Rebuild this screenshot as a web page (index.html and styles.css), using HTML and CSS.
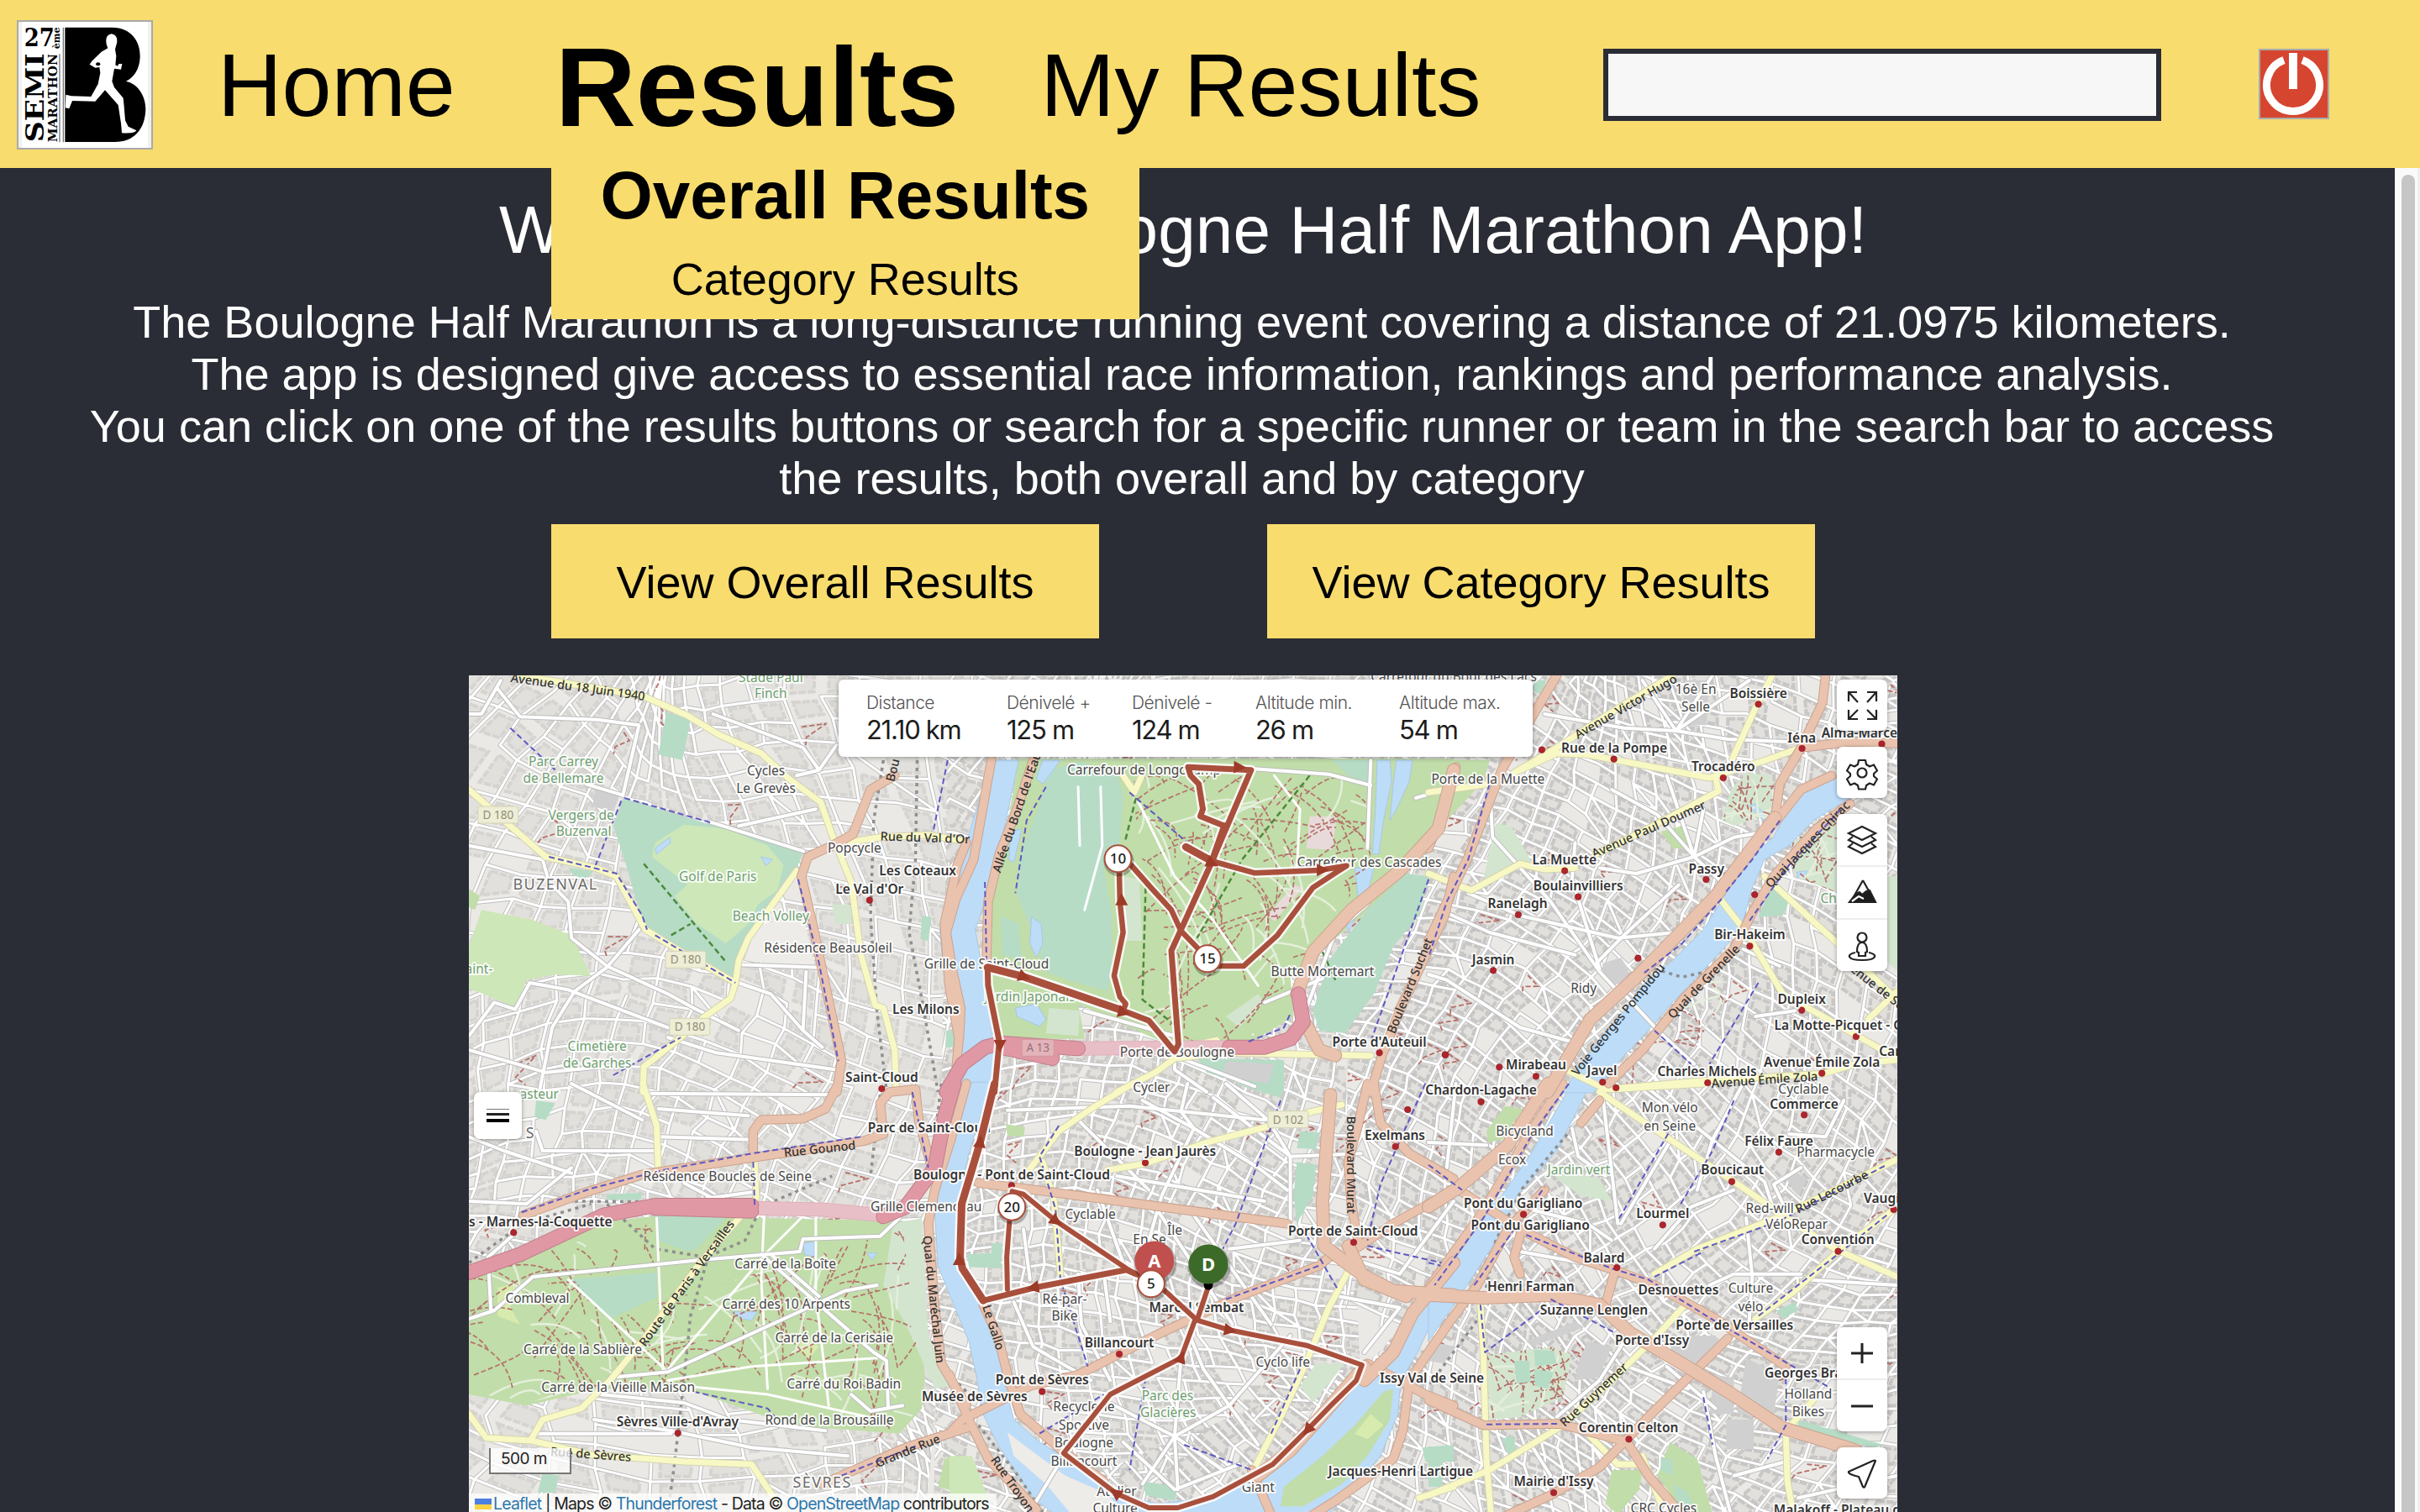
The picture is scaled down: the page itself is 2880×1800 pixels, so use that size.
FILE: index.html
```html
<!DOCTYPE html>
<html lang="en">
<head>
<meta charset="utf-8">
<title>Boulogne Half Marathon</title>
<link rel="stylesheet" href="styles.css">
</head>
<body>
<header class="header">
  <svg class="logo" viewBox="66 78 474 450" preserveAspectRatio="none">
    <rect x="66" y="78" width="474" height="450" fill="#fff"/>
    <path fill="#f0f0f0" d="M66 78h12v450h-12zM528 78h12v450h-12z"/>
    <path d="M232 98H400C470 98 502 150 500 205C498 250 475 280 450 290C490 298 520 340 520 390C518 460 480 507 410 507H232Z"/>
    <path fill="#fff" d="M385 172L380 158Q374 124 398 121Q420 124 418 150L411 176L415 200L412 232L420 236L424 228L436 228L432 248L408 245L400 290L408 312L440 350L443 380L447 430L458 452L487 466Q480 478 435 475L432 440L422 375L375 322L340 362L258 360L247 388L233 385L235 338L255 343L325 345L350 300L358 260L355 240L340 242L320 230L328 218L362 185Z"/>
    <ellipse cx="350" cy="229" rx="8" ry="6"/>
    <path fill="none" stroke="#777" stroke-width="4" d="M213 193V508M226 98V508"/>
    <g class="logo-text">
      <text x="86" y="165" font-size="92" textLength="108" lengthAdjust="spacingAndGlyphs">27</text>
      <text transform="translate(213 175) rotate(-90)" font-size="32" textLength="78" lengthAdjust="spacingAndGlyphs">ème</text>
      <text transform="translate(156 508) rotate(-90)" font-size="90" textLength="318" lengthAdjust="spacingAndGlyphs">SEMI</text>
      <text transform="translate(204 508) rotate(-90)" font-size="46" textLength="316" lengthAdjust="spacingAndGlyphs">MARATHON</text>
    </g>
  </svg>
  <nav class="nav">
    <a class="nav-link">Home</a>
    <div class="nav-group">
      <a class="nav-link nav-link-active">Results</a>
      <div class="dropdown">
        <a class="dropdown-link dropdown-link-active">Overall Results</a>
        <a class="dropdown-link">Category Results</a>
      </div>
    </div>
    <a class="nav-link">My Results</a>
  </nav>
  <input class="search" type="text">
  <svg class="power" viewBox="0 0 80 80">
    <rect width="80" height="80" fill="#d64530"/>
    <path fill="none" stroke="#fff" stroke-width="9" d="M28 11.5A31.5 31.5 0 1 0 50 11.5"/>
    <rect x="34" y="3" width="10" height="43" fill="#fff"/>
  </svg>
</header>
<div class="viewport">
  <main class="content">
    <h1 class="title">Welcome to the Boulogne Half Marathon App!</h1>
    <p class="intro">The Boulogne Half Marathon is a long-distance running event covering a distance of 21.0975 kilometers.<br>The app is designed give access to essential race information, rankings and performance analysis.<br>You can click on one of the results buttons or search for a specific runner or team in the search bar to access<br>the results, both overall and by category</p>
    <div class="actions">
      <a class="button">View Overall Results</a>
      <a class="button">View Category Results</a>
    </div>
    <section class="map">
      <svg class="map-canvas" id="map" viewBox="558 804 1700 996" width="1700" height="996"></svg>
      <dl class="stats">
        <div class="stat"><dt>Distance</dt><dd>21.10 km</dd></div>
        <div class="stat"><dt>Dénivelé +</dt><dd>125 m</dd></div>
        <div class="stat"><dt>Dénivelé -</dt><dd>124 m</dd></div>
        <div class="stat"><dt>Altitude min.</dt><dd>26 m</dd></div>
        <div class="stat"><dt>Altitude max.</dt><dd>54 m</dd></div>
      </dl>
      <div class="tools tools-top">
        <div class="tool-box"><svg class="tool" viewBox="0 0 60 61"><path d="M14 26V15H24M14 15L25 27M36 15H47V26M47 15L36 27M14 36V47H25M14 47L25 36M36 47H47V36M47 47L36 36"/></svg></div>
        <div class="tool-box"><svg class="tool" viewBox="0 0 60 61"><circle cx="30" cy="31" r="5.5"/><path stroke-linejoin="round" d="M26 16h8l1 5 4 2.500 5-2 4 7-4 3.500v3l4 3.500-4 7-5-2-4 2.500-1 4.500h-8l-1-4.500-4-2.500-5 2-4-7 4-3.500v-3l-4-3.500 4-7 5 2 4-2.500z"/></svg></div>
        <div class="tool-box">
          <svg class="tool" viewBox="0 0 60 61"><path d="M30 15L46 23L30 31L14 23ZM19 27L14 31L30 39L46 31L41 27M19 35L14 39L30 47L46 39L41 35"/></svg>
          <svg class="tool" viewBox="0 0 60 61"><path d="M31 16L17 41M31 16L45 41"/><path fill="#1b1b1b" d="M23 32l4-2 3 3 5-4 4-1 7 14H15z"/><path stroke="#fff" d="M18 41l8-6 6 3"/></svg>
          <svg class="tool" viewBox="0 0 60 61"><circle cx="30" cy="21" r="5.500"/><path d="M24 38c0-8 2-11 6-11s6 3 6 11l-2 1v4h-8v-4zM22 39c-11 2-10 9 8 9s19-7 8-9"/></svg>
        </div>
      </div>
      <div class="tools tools-bottom">
        <div class="tool-box"><svg class="tool tool-bold" viewBox="0 0 60 61"><path d="M17 31H43M30 19V43"/></svg><svg class="tool tool-bold" viewBox="0 0 60 61"><path d="M17 31H43"/></svg></div>
        <div class="tool-box"><svg class="tool" viewBox="0 0 60 61"><path stroke-linejoin="round" d="M46 16Q45 15 43 16L14 29Q13 32 26 35L31 47Q33 49 34 45Z"/></svg></div>
      </div>
      <div class="menu-toggle"><i></i><i></i><i></i></div>
      <div class="scale">500 m</div>
      <div class="attribution"><svg class="flag" viewBox="0 0 20 13"><path fill="#4d7fe0" d="M0 0h20v7H0z"/><path fill="#f6d443" d="M0 7h20v6H0z"/></svg><a>Leaflet</a> | Maps © <a>Thunderforest</a> - Data © <a>OpenStreetMap</a> contributors</div>
    </section>
  </main>
  <div class="scrollbar"><div class="thumb"></div></div>
</div>
<script src="map.js"></script>
</body>
</html>
```
FILE: styles.css
```css
* { box-sizing: border-box; }
body {
  margin: 0;
  width: 2880px;
  height: 1800px;
  overflow: hidden;
  display: flex;
  flex-direction: column;
  background: #2a2d35;
  font-family: "Liberation Sans", Arial, sans-serif;
  color: #000;
}
.header {
  flex: none;
  height: 200px;
  padding: 2px 0 0 20px;
  display: flex;
  align-items: center;
  background: #f8dc6e;
  position: relative;
  z-index: 2;
}
.logo { width: 162px; height: 154px; border: 2px solid #aaa; }
.logo-text { font-family: "DejaVu Serif", serif; font-weight: bold; }
.nav { display: flex; align-items: center; margin-left: 77px; width: 1649px; height: 198px; white-space: nowrap; }
.nav-link { font-size: 106px; line-height: 122px; }
.nav-group { position: relative; margin: 0 97px 0 119px; padding-top: 5px; }
.nav-link-active { font-size: 133px; line-height: 152px; font-weight: bold; }
.dropdown {
  position: absolute;
  left: -5px;
  top: 176px;
  width: 700px;
  height: 181px;
  display: flex;
  flex-direction: column;
  align-items: center;
  background: #f8dc6e;
}
.dropdown-link { font-size: 54px; line-height: 62px; margin-top: 22px; }
.dropdown-link-active { font-size: 80px; line-height: 92px; margin-top: -12px; font-weight: bold; }
.search { width: 664px; height: 86px; border: 6px solid #2a2d35; background: #f7f7f7; padding: 0; }
.power { width: 84px; height: 84px; margin: -2px 0 0 116px; border: 2px solid #aaa; }
.viewport { flex: 1; min-height: 0; display: flex; }
.content {
  flex: 1;
  padding: 28px 34px 0 0;
  display: flex;
  flex-direction: column;
  align-items: center;
  color: #fff;
  overflow: hidden;
}
.title { margin: 0; font-size: 80px; line-height: 92px; font-weight: normal; letter-spacing: .15px; white-space: nowrap; }
.intro { margin: 32px 0 24px -3px; font-size: 54px; line-height: 62px; letter-spacing: .02px; text-align: center; white-space: nowrap; }
.actions { display: flex; gap: 200px; margin-bottom: 44px; }
.button { width: 652px; height: 136px; line-height: 138px; text-align: center; font-size: 54px; background: #f8dc6e; color: #000; }
.scrollbar { width: 30px; height: 1600px; padding: 8px 3px 0 8px; background: #fafafa; border-right: 3px solid #efefef; }
.thumb { width: 16px; height: 100%; border-radius: 8px 8px 0 0; background: #c6c6c6; }

.map { position: relative; flex: none; width: 1700px; height: 996px; overflow: hidden; font-family: Inter, "Noto Sans", sans-serif; color: #222; }
.map-canvas { display: block; background: #ebe9e5; }
.stats {
  position: absolute;
  left: 440px;
  top: 5px;
  width: 826px;
  height: 92px;
  margin: 0;
  padding: 15px 0 0 33px;
  display: grid;
  grid-template-columns: 167px 149px 147px 171px 1fr;
  background: #fff;
  border-radius: 6px;
  box-shadow: 0 1px 6px rgba(0, 0, 0, .35);
  white-space: nowrap;
}
.stat dt { font-size: 21px; line-height: 26px; letter-spacing: -.5px; font-weight: 300; color: #555; }
.stat dd { margin: 0; font-size: 31px; line-height: 38px; letter-spacing: -1.3px; color: #1c1c1c; }
.tools { position: absolute; right: 12px; width: 60px; display: flex; flex-direction: column; gap: 19px; }
.tools-top { top: 5px; }
.tools-bottom { top: 776px; }
.tool-box { background: #fff; border-radius: 7px; box-shadow: 0 1px 5px rgba(0, 0, 0, .35); }
.tool { display: block; width: 60px; height: 61px; fill: none; stroke: #222; stroke-width: 2.2; }
.tool + .tool { border-top: 2px solid #eee; height: 63px; }
.tool-bold { stroke-width: 3; }
.menu-toggle { position: absolute; left: 6px; top: 496px; width: 57px; height: 56px; padding: 20px 15px; background: #fff; border-radius: 7px; box-shadow: 0 1px 5px rgba(0, 0, 0, .35); display: flex; flex-direction: column; gap: 4px; }
.menu-toggle i { height: 4px; background: #222; }
.menu-toggle i:first-child { background: #777; height: 2px; }
.menu-toggle i:last-child { height: 5px; background: #000; }
.scale { position: absolute; left: 24px; top: 920px; width: 98px; height: 31px; padding-left: 12px; border: 2px solid #777; border-top: 0; background: rgba(255, 255, 255, .75); font: 19px/26px Inter, sans-serif; letter-spacing: -.5px; }
.attribution { position: absolute; left: 0; bottom: 0; height: 22px; padding: 0 9px 0 7px; background: rgba(255, 255, 255, .75); font-size: 19.500px; line-height: 24px; letter-spacing: -.85px; white-space: nowrap; }
.attribution a { color: #2b77ad; }
.flag { width: 20px; height: 13px; margin-right: 2px; }

.road-line { fill: none; stroke-linejoin: round; stroke-linecap: round; }
.label { font-family: "Noto Sans", sans-serif; font-size: 15.500px; fill: #484848; text-anchor: middle; paint-order: stroke; stroke: rgba(255, 255, 255, .85); stroke-width: 4px; stroke-linejoin: round; }
.label-station { font-weight: 600; fill: #333; }
.label-park { fill: #6f9f70; }
.label-district { font-size: 18px; letter-spacing: 1.4px; fill: #6c6c6c; }
.label-road { font-size: 14.500px; font-weight: 500; fill: #333; stroke: none; }
.label-start { text-anchor: start; }
.shield { font-family: "Noto Sans", sans-serif; font-size: 13.500px; fill: #8f8f78; text-anchor: middle; }
.marker { font-family: "Noto Sans", sans-serif; font-size: 17px; font-weight: 500; fill: #222; text-anchor: middle; }
.marker-end { font-size: 22px; font-weight: bold; fill: #fff; }
```
FILE: map.js
```js
const svg = document.getElementById('map');

// Survey sheets: origin and units-per-pixel for each of the six map sections.
const sheets = {
  a: [550, 790, 600 / 1568], b: [1130, 790, 600 / 1568], c: [1700, 790, 570 / 1568],
  d: [550, 1290, 600 / 1568], e: [1130, 1290, 600 / 1568], f: [1700, 1290, 570 / 1568]
};
const at = (s, x, y) => [sheets[s][0] + x * sheets[s][2], sheets[s][1] + y / 3];
const path = (s, str) => 'M' + str.trim().split(/\s+/).map(p => {
  const [x, y] = p.split(',').map(Number);
  return at(s, x, y).map(v => v.toFixed(1)).join(' ');
}).join('L');
const el = (name, attrs, parent = svg, text) => {
  const n = document.createElementNS('http://www.w3.org/2000/svg', name);
  for (const k in attrs) n.setAttribute(k, attrs[k]);
  if (text) n.textContent = text;
  parent.appendChild(n);
  return n;
};
let seed = 7;
const rnd = () => (seed = (seed * 16807) % 2147483647) / 2147483647;

// Street mesh of the built-up districts.
const defs = el('defs', {});
const O = 1.8367;
const poly = s => s.split(' ').map(p => p.split(',').map(v => v * O).join(',')).join(' ');
function mesh(id, outline, angle, stepX, stepY, block) {
  el('polygon', { points: poly(outline) }, el('clipPath', { id }, defs));
  const g = el('g', { 'clip-path': `url(#${id})` });
  const pts = outline.split(' ').map(p => p.split(',').map(v => v * O));
  const cx = pts.reduce((t, p) => t + p[0], 0) / pts.length, cy = pts.reduce((t, p) => t + p[1], 0) / pts.length;
  const R = Math.max(...pts.map(p => Math.hypot(p[0] - cx, p[1] - cy)));
  const n = Math.ceil(R / stepX), m = Math.ceil(R / stepY);
  const a = angle * Math.PI / 180, grid = [];
  for (let i = -n; i <= n; i++) {
    grid[i + n] = [];
    for (let j = -m; j <= m; j++) {
      const u = i * stepX + (rnd() - .5) * stepX * .32, v = j * stepY + (rnd() - .5) * stepY * .32;
      const b = a + .35 * Math.sin(u / 170 + 1) * Math.cos(v / 150);
      grid[i + n][j + m] = [cx + u * Math.cos(b) - v * Math.sin(b), cy + u * Math.sin(b) + v * Math.cos(b)];
    }
  }
  let streets = '', blocks = '', paths = '';
  const f = p => p[0].toFixed(1) + ' ' + p[1].toFixed(1);
  for (let i = 0; i < 2 * n; i++) for (let j = 0; j < 2 * m; j++) {
    const p = grid[i][j], q = grid[i + 1][j], r = grid[i + 1][j + 1], s = grid[i][j + 1];
    if (rnd() < .86) streets += 'M' + f(p) + 'L' + f(q);
    if (rnd() < .86) streets += 'M' + f(p) + 'L' + f(s);
    if (rnd() < .06) streets += 'M' + f(p) + 'L' + f(r);
    const c = [(p[0] + r[0]) / 2, (p[1] + r[1]) / 2];
    const k = t => [c[0] + (t[0] - c[0]) * .62, c[1] + (t[1] - c[1]) * .62];
    if (rnd() < .82) blocks += 'M' + [p, q, r, s].map(k).map(f).join('L') + 'Z';
    if (rnd() < .05) paths += 'M' + f(k(p)) + 'L' + f(k(q)) + 'L' + f(k(s)) + 'l' + ((rnd() - .5) * 24).toFixed(1) + ' 9';
  }
  el('path', { d: blocks, fill: '#e2e0dc', stroke: block, 'stroke-width': 4, 'stroke-dasharray': '9 2' }, g);
  el('path', { d: streets, stroke: '#bfbfbf', 'stroke-width': 5, 'stroke-linecap': 'round' }, g);
  el('path', { d: streets, stroke: '#fff', 'stroke-width': 3, 'stroke-linecap': 'round' }, g);
  el('path', { d: paths, fill: 'none', stroke: '#b76e68', 'stroke-width': 1.8, 'stroke-dasharray': '6 3' }, g);
}
mesh('west', '304,438 650,438 600,980 304,980', 12, 35, 27, '#d6d4d0');
mesh('boulogne', '615,438 890,438 872,700 882,900 700,980 605,980', 9, 25, 22, '#cdcbc8');
mesh('paris16', '875,438 1229,438 1190,520 980,780 930,860 872,860', 28, 28, 21, '#c8c7c5');
mesh('paris15', '1229,438 1229,980 650,980 890,880 980,780 1170,520', 38, 29, 21, '#c8c7c5');

const fills = { wood: '#c1dda9', pitch: '#b6dcc6', grass: '#cde7b8', pale: '#d4e5cf', grey: '#d0d0d0', water: '#bddcf8', land: '#eeece8', lawn: '#d8ebae', hosp: '#e8dada' };
const areas = [
  // golf course and western greens
  ['a', 'pitch', '500,480 1062,675 1040,730 880,985 848,1140 760,1090 650,1000 575,950 540,840 505,700 470,580'],
  ['a', 'grass', '600,640 590,690 700,790 660,830 730,930 820,1000 890,930 920,860 980,810 1000,720 950,650 820,590 690,575'],
  ['a', 'water', '600,660 645,620 648,640 605,680'], ['a', 'water', '930,690 965,700 945,722'],
  ['a', 'pitch', '635,175 712,195 685,345 610,325'], ['a', 'grey', '415,445 490,470 470,530 405,510'],
  ['a', 'grass', '60,880 220,915 340,970 400,1115 290,1110 200,1130 170,1230 90,1190 21,1160 21,1010'],
  ['a', 'land', '930,930 1060,900 1100,1090 880,1060 900,980'], ['a', 'wood', '21,805 55,830 40,880 21,870'],
  ['a', 'pitch', '1430,900 1460,905 1450,990 1425,985'], ['a', 'pitch', '1505,1310 1530,1310 1530,1370 1503,1370'],
  ['a', 'pitch', '330,730 410,740 380,770 345,755'], ['a', 'pale', '1150,860 1210,860 1210,930 1160,930'],
  // Bois de Boulogne
  ['b', 'wood', '215,340 1568,340 1540,460 1500,620 1440,720 1340,850 1200,980 1060,1120 1070,1260 940,1350 730,1385 540,1290 400,1215 420,1340 160,1340 120,1090 115,900 160,720'],
  ['b', 'pitch', '310,380 400,350 520,385 540,470 530,640 480,740 505,900 505,1100 490,1170 370,1130 300,1100 270,990 210,830 215,700 280,500'],
  ['b', 'pale', '545,760 590,770 600,990 540,990'], ['b', 'pitch', '160,900 215,930 225,1060 165,1040'],
  ['b', 'hosp', '1120,545 1205,545 1190,665 1110,660'], ['b', 'hosp', '1070,790 1100,800 1010,920 990,900'],
  ['b', 'pitch', '1420,750 1490,760 1460,900 1380,1010 1320,1180 1230,1320 1150,1310 1130,1240 1180,1060 1300,880'],
  ['b', 'pitch', '1190,345 1310,345 1310,430 1240,400'], ['b', 'pale', '860,1260 960,1180 980,1210 900,1300'],
  ['b', 'pitch', '770,1410 1040,1415 1040,1530 940,1510 800,1460'], ['b', 'grey', '860,1420 1010,1430 990,1500 850,1470'],
  ['b', 'pale', '310,1230 405,1240 400,1330 300,1320'],
  ['b', 'water', '1330,345 1370,345 1375,420 1350,560 1335,680 1315,680 1325,520'], ['b', 'water', '1390,345 1440,345 1430,420 1390,520 1370,560 1380,430'],
  ['b', 'water', '255,905 285,930 290,1000 270,1050 250,1000'], ['b', 'water', '205,1230 270,1215 300,1270 280,1295 210,1260'],
  ['b', 'water', '1260,730 1320,730 1300,820 1240,960 1235,930 1270,830'], ['b', 'water', '190,600 225,590 200,710 185,700'],
  ['b', 'water', '290,345 345,345 290,430 270,410'],
  // right bank and Champ-de-Mars
  ['c', 'wood', '0,345 200,345 180,420 60,560 0,560'], ['c', 'pitch', '345,60 385,60 375,110 345,100'],
  ['c', 'pale', '220,570 270,580 340,710 180,770'], ['c', 'wood', '760,600 830,580 860,660 800,660'],
  ['c', 'grey', '570,1070 630,1050 655,1090 640,1140 600,1150 570,1120'],
  ['c', 'pale', '1040,390 1120,400 1130,530 1000,580 960,560 990,450'], ['c', 'water', '1050,510 1070,500 1110,550 1095,560'],
  ['c', 'pale', '1190,640 1340,520 1340,820 1200,760'], ['c', 'pitch', '1120,795 1180,850 1160,900 1080,905'],
  ['c', 'pale', '1500,760 1535,760 1535,1100 1500,1060'], ['c', 'grey', '840,60 920,60 910,220 830,220'],
  ['c', 'water', '1205,745 1240,740 1230,765 1210,765'],
  // Parc de Saint-Cloud
  ['d', 'wood', '21,700 200,600 400,500 620,470 900,480 1370,490 1410,780 1440,1050 1430,1160 1360,1250 1020,1220 700,1090 430,1090 200,1150 21,1110'],
  ['d', 'pitch', '330,700 605,675 605,765 460,840'], ['d', 'pitch', '600,465 820,480 730,590 700,600 610,560'],
  ['d', 'pale', '1340,500 1430,480 1450,900 1520,1080 1470,1090 1380,860 1310,720'], ['d', 'pitch', '230,60 290,70 260,130 225,120'],
  ['d', 'lawn', '110,730 170,710 150,800 180,860 110,830'], ['d', 'lawn', '1070,900 1110,940 1080,980 1040,950'],
  ['d', 'water', '838,815 918,815 900,845 870,840'], ['d', 'water', '1060,570 1095,565 1095,620 1065,610'], ['d', 'water', '1260,605 1290,605 1275,630'],
  ['d', 'pitch', '450,395 560,390 555,415 450,415'], ['d', 'wood', '1500,1340 1568,1330 1568,1470 1480,1440'],
  ['d', 'pitch', '250,1390 300,1400 290,1460 235,1460'],
  // Boulogne-Billancourt
  ['e', 'pitch', '130,570 165,570 160,660 60,655 55,610 130,605'], ['e', 'pitch', '890,0 1040,0 1030,50 940,20'],
  ['e', 'pitch', '1090,170 1150,175 1140,235 1080,230'], ['e', 'pitch', '1080,280 1140,290 1130,400 1080,500 1070,400'],
  ['e', 'wood', '175,145 235,155 230,190 180,185'], ['e', 'pale', '1140,1000 1230,1000 1130,1140 1090,1080'],
  ['e', 'pitch', '600,1420 710,1440 700,1490 610,1470'], ['e', 'pitch', '1470,1300 1568,1290 1568,1350 1480,1350'],
  ['e', 'grass', '0,1330 70,1330 120,1480 90,1540 0,1540'],
  // Issy and the exhibition grounds
  ['f', 'pale', '190,970 400,940 470,970 440,1120 300,1190 200,1200'],
  ['f', 'grey', '0,920 90,940 50,1000 0,990'], ['f', 'grey', '520,920 600,940 560,1050 480,1060 490,1000'],
  ['f', 'grey', '820,900 940,900 960,940 890,1020 790,950'], ['f', 'grey', '935,1040 1000,1050 1000,1180 920,1180'],
  ['f', 'grey', '1040,980 1150,1040 1130,1190 1010,1180'], ['f', 'grey', '975,1200 1065,1200 1065,1305 975,1305'],
  ['f', 'pitch', '1210,1200 1490,1290 1460,1300 1210,1240'], ['f', 'pitch', '1140,810 1200,780 1210,810 1160,840'],
  ['f', 'pale', '395,300 560,340 600,420 500,400 430,350'], ['f', 'wood', '190,170 250,80 310,90 240,200 195,210'],
  ['f', 'wood', '790,1280 880,1340 930,1540 840,1540 750,1400'], ['f', 'pitch', '760,1340 800,1340 800,1400 760,1380'], ['f', 'pitch', '800,1430 850,1460 870,1520 820,1510'],
  ['f', 'wood', '600,1380 700,1380 690,1450 620,1540 580,1500'], ['f', 'pitch', '0,1295 50,1300 45,1440 0,1440'], ['f', 'pitch', '240,1270 275,1255 290,1310 260,1325'],
  ['f', 'grey', '1190,310 1240,340 1210,400 1170,340'], ['f', 'grey', '480,850 510,870 340,940 320,920'],
  // the Seine
  ['a', 'water', '1568,790 1530,800 1515,950 1510,1060 1540,1200 1568,1280'],
  ['b', 'water', '130,345 215,345 190,480 150,700 110,850 80,950 100,1080 125,1250 140,1400 130,1530 30,1530 40,1350 20,1200 -20,1080 -30,950 10,800 60,610'],
  ['e', 'water', '30,-5 132,-5 100,100 60,250 30,400 20,600 40,700 100,780 130,880 160,1000 175,1090 200,1200 280,1280 350,1330 450,1420 560,1480 650,1500 800,1480 950,1400 1040,1340 1150,1200 1230,1110 1300,1040 1370,950 1440,820 1500,700 1568,600 1568,760 1500,850 1460,950 1420,1030 1400,1100 1395,1180 1340,1330 1250,1450 1180,1540 330,1540 260,1480 150,1290 100,1170 85,1050 60,920 10,780 -36,650 -46,450 -20,330 15,150'],
  ['e', 'land', '180,1245 230,1290 360,1400 480,1460 560,1540 380,1540 300,1430 200,1330'],
  ['e', 'wood', '1350,1100 1380,1090 1370,1200 1300,1330 1220,1430 1100,1510 1030,1510 1040,1440 1160,1330 1260,1220'],
  ['e', 'lawn', '1310,1180 1350,1220 1300,1270 1260,1250'],
  ['f', 'water', '470,0 530,0 490,90 420,240 340,340 290,400 240,530 150,680 90,780 0,920 0,740 50,670 150,500 240,400 330,260 400,130'],
  ['c', 'water', '1330,410 1230,460 1180,510 1130,620 1020,720 970,830 900,950 800,1060 700,1150 640,1240 560,1340 500,1430 440,1533 540,1533 640,1400 720,1310 800,1210 870,1130 980,1000 1030,920 1060,800 1100,700 1180,650 1260,560 1380,480 1380,400']
];
areas.forEach(([s, kind, pts]) => el('path', { d: path(s, pts) + 'Z', fill: fills[kind], stroke: kind === 'water' ? '#a9c9e4' : 'none' }));

// Footpaths and rides inside the woods and gardens.
function rides(id, s, outline, count) {
  el('path', { d: path(s, outline) + 'Z' }, el('clipPath', { id }, defs));
  const g = el('g', { 'clip-path': `url(#${id})`, fill: 'none' });
  const pts = outline.split(' ').map(p => at(s, ...p.split(',').map(Number)));
  const x0 = Math.min(...pts.map(p => p[0])), x1 = Math.max(...pts.map(p => p[0]));
  const y0 = Math.min(...pts.map(p => p[1])), y1 = Math.max(...pts.map(p => p[1]));
  for (let i = 0; i < count; i++) {
    const x = x0 + rnd() * (x1 - x0), y = y0 + rnd() * (y1 - y0), t = rnd() * 6.3, l = 30 + rnd() * 80;
    const dx = Math.cos(t) * l, dy = Math.sin(t) * l;
    const white = i % 4 === 0;
    el('path', { d: `M${x} ${y}q${dx / 2 + rnd() * 24} ${dy / 2 - rnd() * 24} ${dx} ${dy}`, stroke: white ? '#e4efdb' : '#b5716b', 'stroke-width': white ? 2.500 : 1.7, 'stroke-dasharray': white ? 'none' : '6 3' }, g);
  }
}
rides('bois', 'b', '560,400 1300,400 1310,700 1180,960 1060,1110 940,1340 740,1380 600,1240 560,1000 600,700', 130);
rides('parc', 'd', '21,700 200,610 590,500 600,660 340,690 460,850 620,780 1370,520 1400,780 1430,1150 1360,1240 1020,1210 700,1080 430,1080 200,1140 21,1100', 150);
rides('champ', 'c', '960,560 1030,400 1130,400 1130,560', 28);
rides('tour', 'c', '1190,640 1340,520 1340,820 1200,760', 28);
rides('expo', 'f', '190,970 400,940 470,970 440,1120 300,1190 200,1200', 36);
rides('grenelle', 'c', '900,1110 1000,1150 850,1400 640,1530 660,1440 780,1280', 36);
['280,990 330,990 335,1065 290,1070', '345,950 410,955 420,1000 350,1010', '345,1020 410,1030 390,1090 350,1080'].forEach(p => el('path', { d: path('f', p) + 'Z', fill: fills.pitch }));

const styles = {
  o: ['#e9c3ae', 9.500, '#c9a390'], O: ['#e9c3ae', 14, '#c9a390'], y: ['#f8f8c4', 7, '#d3d2b4'],
  m: ['#df98a4', 16, '#c07f8a'], M: ['#e8bfc6', 15, '#e0b0b8'], w: ['#fff', 4, '#bdbdbd'],
  r: ['#8f8f8f', 3.5], c: ['#5f59c2', 2], g: ['#4c8a3c', 2.500], h: ['#fff', 3]
};
const roads = [
  ['a', 'y', '180,42 400,85 560,115 700,185 800,255 930,320 1015,410 1115,495 1150,610 1210,780 1240,1040 1285,1220 1310,1230 1345,1380 1350,1530'],
  ['a', 'y', '21,450 150,580 260,690 415,730 480,760 570,950 660,1015 850,1140 860,1060 890,980 1040,740'],
  ['a', 'y', '850,1140 835,1195 750,1265 680,1335 565,1440 562,1530'], ['a', 'y', '1190,640 1300,620 1450,612 1568,635'],
  ['a', 'w', '385,430 500,470'], ['a', 'w', '770,565 1062,670'], ['a', 'w', '21,650 250,700 270,780 330,850 340,980 450,1080 640,1180 720,1230 860,1310'],
  ['a', 'w', '860,1075 1110,1085'], ['a', 'w', '860,1140 960,1180 1060,1310 1120,1370'], ['a', 'w', '21,1330 100,1210 165,1235 210,1140 330,1165 640,1300'],
  ['a', 'w', '550,950 450,1085 350,1170 280,1300 240,1530'], ['a', 'w', '21,180 60,180 120,60'], ['a', 'w', '110,90 180,190 420,200 550,220 500,470'],
  ['a', 'w', '1040,400 1110,380 1165,290'], ['a', 'w', '780,180 1060,300 1110,380'], ['a', 'w', '860,580 1100,520'], ['a', 'w', '1070,1100 1060,1310'],
  ['a', 'w', '640,1335 790,1390 1160,1450'], ['a', 'w', '21,1380 260,1460 520,1430'],
  ['a', 'o', '1345,400 1270,450 1215,610 1150,650 1075,690 1055,760 1090,930 1130,1150 1160,1310 1180,1420 1165,1530'],
  ['a', 'o', '1568,640 1540,720 1500,930 1515,1150 1545,1340 1530,1530'],
  ['a', 'r', '1310,345 1280,560 1270,900 1290,1240 1320,1530'], ['a', 'r', '1415,345 1410,700 1390,960 1430,1200 1480,1530'],
  ['a', 'c', '505,480 780,570'], ['a', 'c', '495,490 415,720'], ['a', 'c', '270,690 480,750 560,900 575,950'], ['a', 'c', '600,970 850,1140'], ['a', 'c', '1045,770 1110,1070 1170,1420'],
  ['a', 'c', '470,1470 680,1335'], ['a', 'c', '150,230 290,380'], ['a', 'c', '1510,345 1465,600'], ['a', 'g', '565,715 820,1065'], ['a', 'g', '650,970 710,930'],
  ['b', 'o', '130,345 75,700 20,840 -10,960 10,1100 35,1230 30,1340'], ['b', 'o', '260,345 210,520 155,680 120,850 115,1070'],
  ['b', 'O', '1568,380 1520,590 1400,740 1250,880 1130,1030 1080,1180'], ['b', 'o', '1568,760 1540,900 1400,1240 1345,1400 1310,1530'],
  ['b', 'm', '-10,1530 40,1430 110,1370 160,1355 400,1375'], ['b', 'M', '400,1375 860,1370'], ['b', 'm', '870,1370 980,1370 1060,1340 1100,1280 1085,1180'], ['b', 'm', '160,1370 320,1410'],
  ['b', 'O', '1110,1290 1150,1380 1200,1400'], ['b', 'y', '700,1410 850,1390 1310,1400'], ['b', 'y', '730,1370 830,1345 860,1385'], ['b', 'y', '700,1410 640,1460 520,1530'],
  ['b', 'y', '540,400 575,460 600,395'], ['b', 'w', '700,1400 700,1450 800,1530'], ['b', 'w', '720,1410 950,1510'], ['b', 'w', '940,375 1180,395 1310,435'],
  ['b', 'w', '1310,345 1300,660'], ['b', 'w', '1450,480 1568,440'], ['b', 'w', '980,1210 1160,1125'], ['b', 'w', '420,1240 700,1330'], ['b', 'w', '1130,1300 1110,1230 1200,960 1300,860'],
  ['b', 'h', '590,500 700,760 810,900 960,1150'], ['b', 'h', '1010,400 1090,520 1080,740'], ['b', 'h', '470,440 475,650 420,880'], ['b', 'h', '400,440 405,650'],
  ['b', 'c', '560,460 740,640'], ['b', 'c', '300,440 240,560 205,820'], ['b', 'c', '110,780 115,1060'], ['b', 'c', '1490,770 1310,1350'], ['b', 'c', '930,1350 1040,1300 1060,1250'],
  ['b', 'g', '1120,400 910,700 770,980'], ['b', 'g', '580,480 545,640'], ['b', 'g', '610,800 600,1200 700,1290'], ['b', 'g', '1160,1030 1200,1130'],
  ['c', 'y', '800,42 620,160 420,300 280,390'], ['c', 'y', '0,460 200,430'], ['c', 'y', '300,380 420,320 520,325 920,408 1090,350 1220,300'],
  ['c', 'y', '1125,42 1070,160 995,340'], ['c', 'y', '940,410 950,455 700,600 550,680'], ['c', 'y', '480,730 380,735 300,715 140,810 0,750'],
  ['c', 'y', '1100,760 1340,1000 1535,1200'], ['c', 'y', '940,820 1040,960 1160,1180 1470,1370 1535,1400'], ['c', 'y', '450,1450 580,1520 900,1490 1290,1465 1400,1430 1535,1415'], ['c', 'y', '1440,1270 1535,1170'],
  ['c', 'o', '420,42 350,170 240,380 130,690 0,990'], ['c', 'o', '90,370 40,550 0,660'], ['c', 'o', '1300,42 1290,140 1220,300 1150,430 1135,550'], ['c', 'O', '1135,550 940,830 780,1010 690,1110 530,1270 390,1530'],
  ['c', 'o', '1220,300 1380,280 1535,285'], ['c', 'o', '1320,400 1220,450 1140,560'], ['c', 'o', '1380,500 1270,590 1130,760 1060,890 1000,1020 840,1190 700,1380 590,1500'],
  ['c', 'w', '810,240 700,60'], ['c', 'w', '810,240 930,42'], ['c', 'w', '810,240 1050,60'], ['c', 'w', '810,240 640,230 380,180'], ['c', 'w', '810,240 980,270 1190,280'],
  ['c', 'w', '870,690 780,400'], ['c', 'w', '870,690 900,520'], ['c', 'w', '870,690 750,540 600,450'], ['c', 'w', '870,690 1000,620 1110,600'], ['c', 'w', '870,690 960,780'], ['c', 'w', '870,690 680,750 560,730'],
  ['c', 'w', '130,820 300,900 420,930 620,980 810,960'], ['c', 'w', '550,1070 640,970 820,790'], ['c', 'w', '200,430 210,620 400,850 560,1100 620,1170'], ['c', 'w', '480,640 470,770 560,1090'],
  ['c', 'w', '0,1110 60,1130 300,1300 500,1360'], ['c', 'w', '60,890 200,960 480,1040'], ['c', 'w', '640,1180 760,1320 870,1430'], ['c', 'w', '1070,1260 1200,1240'], ['c', 'w', '1030,1020 1150,1080'],
  ['c', 'c', '200,430 130,700 60,850 0,1050'], ['c', 'c', '960,840 830,1000 700,1110'], ['c', 'c', '1350,520 1180,720 1050,920'], ['c', 'c', '1080,1140 920,1430'], ['c', 'c', '1150,560 1060,700 970,820'],
  ['c', 'r', '940,830 1030,950 1150,1180 1400,1330'], ['c', 'r', '740,1090 830,1120 910,1100'], ['c', 'r', '1000,1020 820,1230 640,1440'], ['c', 'c', '740,1310 860,1430'],
  ['d', 'y', '562,0 605,150 610,310'], ['d', 'y', '910,280 915,410 740,640 560,920 460,1060 370,1160 250,1200 215,1270'], ['d', 'y', '21,1180 75,1265 215,1275 400,1325 690,1350 900,1360 970,1480 1010,1540'],
  ['d', 'o', '190,470 380,390 560,325 900,265 1250,205 1310,180 1300,70 1330,30 1410,20 1420,130 1460,300'], ['d', 'o', '1170,0 1130,90 1060,125 930,130 905,170 905,265'],
  ['d', 'm', '21,675 180,610 440,470 600,435 900,435'], ['d', 'm', '600,445 900,455'], ['d', 'M', '900,445 1120,450 1310,470'], ['d', 'm', '1310,475 1380,440 1470,300 1500,120 1530,0'],
  ['d', 'o', '1568,0 1520,200 1470,380 1450,500 1470,800 1490,1000 1568,1150'], ['d', 'o', '1120,1430 1380,1300 1568,1230'],
  ['d', 'w', '21,840 100,810 220,690 740,630 1050,600 1060,555 1300,545 1360,480'], ['d', 'w', '90,815 80,620 160,540'], ['d', 'w', '460,1050 640,1030 1190,740 1290,720'], ['d', 'w', '930,610 1280,960 1320,990 1325,1160'],
  ['d', 'w', '960,610 1110,760'], ['d', 'h', '330,700 640,1030'], ['d', 'h', '605,480 625,1030'], ['d', 'h', '640,1020 950,600 1080,450'], ['d', 'h', '940,450 930,700 950,1090'], ['d', 'h', '640,1060 900,1010 1290,980'], ['d', 'h', '1100,450 1100,750 1140,1150'], ['d', 'h', '690,1080 950,1110 1300,1200'],
  ['d', 'w', '575,35 1160,40'], ['d', 'w', '340,0 560,130'], ['d', 'w', '610,190 900,200'], ['d', 'w', '610,90 890,115'], ['d', 'w', '21,190 130,240 340,320'], ['d', 'w', '230,170 250,240 600,240'], ['d', 'w', '21,420 200,430 340,300'],
  ['d', 'w', '690,355 780,410'], ['d', 'w', '410,1200 650,1240 900,1300 1200,1330'], ['d', 'w', '220,1250 650,1250'], ['d', 'w', '430,1110 690,1140 830,1200 1130,1240'], ['d', 'w', '1210,1110 1270,1170 1370,1150'], ['d', 'w', '760,410 920,385'],
  ['d', 'r', '350,420 900,425'], ['d', 'r', '450,430 600,590 760,620 880,560 930,440 1150,330'], ['d', 'r', '760,640 710,830 690,1060 660,1360 640,1530'], ['d', 'r', '1300,40 1270,330'], ['d', 'r', '1490,0 1470,200'],
  ['d', 'r', '1460,500 1480,850 1500,1020 1568,1100'], ['d', 'r', '21,640 190,500 400,430'],
  ['d', 'c', '185,460 400,375 620,310 900,250 1240,190'], ['d', 'c', '720,1100 950,1160 980,1200'], ['d', 'c', '1400,30 1450,300'], ['d', 'c', '1180,1400 1420,1290'], ['d', 'c', '905,280 910,440'],
  ['e', 'o', '90,355 300,385 1050,500'], ['e', 'O', '1185,40 1160,420 1165,580 1280,680 1380,740 1568,755'], ['e', 'o', '1200,600 1150,650 900,760 640,900 400,1040 250,1080 40,1200 0,1250'],
  ['e', 'o', '1320,0 1340,140 1430,250 1568,340'], ['e', 'o', '1300,0 1270,150 1240,280 1250,430 1270,560'], ['e', 'o', '1568,380 1380,500 1250,600'],
  ['e', 'o', '105,790 150,900 185,1060 220,1180 350,1310 480,1420'], ['e', 'O', '1568,640 1440,820 1380,960 1290,1060'], ['e', 'O', '1290,1010 1200,1130 1060,1310 960,1400'], ['e', 'o', '1568,830 1430,1060 1410,1240 1380,1340 1200,1490 1130,1540'],
  ['e', 'o', '1300,1000 1480,1110 1568,1150'], ['e', 'o', '0,1040 60,1200 120,1340 270,1520'], ['e', 'O', '1240,580 1290,700 1420,760'], ['e', 'o', '940,1380 1000,1540'],
  ['e', 'y', '570,0 440,90 340,170 280,260 240,320'], ['e', 'y', '490,310 610,285 800,210 1000,150'], ['e', 'y', '1110,105 1220,75'], ['e', 'y', '290,280 325,420 345,680'], ['e', 'y', '1240,670 1180,800 1100,1020 1030,1190 950,1370'], ['e', 'y', '1460,1480 1568,1440'],
  ['e', 'w', '180,95 560,80 980,130'], ['e', 'w', '600,60 760,160 960,300 1050,380'], ['e', 'w', '740,0 720,100 760,160 660,400 610,600'], ['e', 'w', '820,50 1060,260 1280,250'], ['e', 'w', '860,0 990,130 1060,260 1060,490'],
  ['e', 'w', '400,130 620,380'], ['e', 'w', '520,330 980,420'], ['e', 'w', '460,380 540,640'], ['e', 'w', '640,440 880,860'], ['e', 'w', '760,470 1000,860'], ['e', 'w', '870,590 1090,560'],
  ['e', 'w', '700,1260 720,980'], ['e', 'w', '700,1260 850,1380'], ['e', 'w', '700,1260 480,1130'], ['e', 'w', '700,1260 870,1150 1060,900'], ['e', 'w', '700,1260 600,1430'], ['e', 'w', '870,1150 790,1020 740,880'], ['e', 'w', '870,1150 960,1290'], ['e', 'w', '700,1260 710,1450'],
  ['e', 'w', '200,780 260,940 440,1060'], ['e', 'w', '230,520 250,700'], ['e', 'w', '400,680 410,860 500,1060'], ['e', 'w', '480,680 500,850'], ['e', 'w', '1210,760 1400,800 1290,960'], ['e', 'w', '540,1280 700,1450 900,1360'], ['e', 'w', '1568,420 1400,680 1290,640'], ['e', 'w', '260,1510 350,1340'],
  ['e', 'c', '1030,60 890,500 850,590'], ['e', 'c', '340,150 280,260 330,450 345,700 430,1010'], ['e', 'c', '1300,580 1530,640'], ['e', 'c', '1480,0 1340,360 1300,560'], ['e', 'c', '1110,540 1210,740'], ['e', 'c', '280,1250 480,1110'], ['e', 'c', '610,1050 560,1380'], ['e', 'c', '730,1290 940,1380'], ['e', 'c', '860,770 1150,650'], ['e', 'c', '1000,1250 1090,1020'], ['e', 'r', '90,1220 200,1380 290,1530'],
  ['f', 'O', '390,0 260,220 100,370 0,440'], ['f', 'o', '440,0 330,180 170,470 0,730'], ['f', 'o', '560,60 500,140'], ['f', 'o', '380,380 260,520 160,720 70,850 0,960'], ['f', 'O', '0,755 180,765 400,755 560,790 660,890 830,1000 980,1100 1160,1230 1400,1310'],
  ['f', 'o', '100,380 300,520 480,620 620,670 740,720 940,840 1170,1010'], ['f', 'o', '610,670 580,790'], ['f', 'o', '980,910 720,1190 560,1370 400,1470 260,1540'], ['f', 'o', '0,1130 180,1220 430,1215 650,1280 720,1400 830,1540'], ['f', 'o', '300,540 280,620 300,680'],
  ['f', 'y', '560,30 750,170 1000,350 1200,500 1330,590 1535,690'], ['f', 'y', '1535,270 1330,380 1160,470 880,590 740,680'], ['f', 'y', '1523,450 1340,600 1200,740 1070,840'], ['f', 'y', '840,790 740,910 600,1060 440,1220 200,1380 0,1470'],
  ['f', 'y', '170,790 180,970 190,1350 205,1540'], ['f', 'y', '530,1260 620,1360 700,1360'], ['f', 'y', '1170,1240 1175,1420 1195,1540'], ['f', 'y', '700,1330 760,1500'], ['f', 'y', '1170,1240 1260,1130'], ['f', 'y', '600,20 900,0'],
  ['f', 'w', '570,40 620,500'], ['f', 'w', '800,190 630,500'], ['f', 'w', '1030,0 930,200 880,380'], ['f', 'w', '700,0 1100,350 1130,450'], ['f', 'w', '1000,380 860,440 740,590'], ['f', 'w', '1040,480 1060,690 1050,850'], ['f', 'w', '920,720 1000,680 1220,680'], ['f', 'w', '1220,300 1130,360 1200,520'],
  ['f', 'w', '300,440 520,500 600,560'], ['f', 'w', '300,600 500,640'], ['f', 'w', '640,920 560,1060 420,1190'], ['f', 'w', '780,1010 940,1160'], ['f', 'w', '900,1100 940,1330 990,1540'], ['f', 'w', '330,1280 400,1400'], ['f', 'w', '650,1010 850,1090'], ['f', 'w', '1000,1400 1170,1350'], ['f', 'w', '0,210 190,220'], ['f', 'w', '90,0 60,300'], ['f', 'w', '1180,180 1300,190 1360,60'], ['f', 'w', '1210,1480 1535,1400'], ['f', 'w', '1230,700 1535,720'], ['f', 'w', '470,160 490,260 580,330'],
  ['f', 'c', '460,0 340,180 180,480 20,720'], ['f', 'c', '320,540 600,660 720,700 940,850 1320,1090'], ['f', 'c', '870,600 1150,490 1500,290'], ['f', 'c', '740,690 900,600'], ['f', 'c', '1500,470 1340,610 1080,830'], ['f', 'c', '170,790 185,960 380,800'], ['f', 'c', '190,1217 430,1215'], ['f', 'c', '150,720 380,370'], ['f', 'c', '800,150 620,490'], ['f', 'c', '1000,60 930,240 820,440'], ['f', 'c', '1170,1020 1170,1220 1110,1340'], ['f', 'c', '400,770 610,890'], ['f', 'c', '900,1120 930,1290'], ['f', 'c', '0,640 40,650'], ['f', 'c', '0,290 110,380'],
  ['f', 'r', '470,160 310,370 220,560 170,830 0,1080'], ['f', 'r', '200,770 400,765 540,780']
];
'rhgwyoOMmc'.split('').forEach(kind => {
  const set = roads.filter(r => r[1] === kind), [color, width, casing] = styles[kind];
  if (casing) set.forEach(r => el('path', { class: 'road-line', d: path(r[0], r[2]), stroke: casing, 'stroke-width': width + 2 }));
  set.forEach(r => {
    const p = el('path', { class: 'road-line', d: path(r[0], r[2]), stroke: color, 'stroke-width': width });
    if ('rcg'.includes(kind)) { p.setAttribute('stroke-dasharray', kind === 'r' ? '4 5' : '7 4'); p.style.strokeLinecap = 'butt'; }
  });
});

// Station dots.
const dots = {
  a: '1267,845', b: '1337,1390 1542,1397',
  c: '1080,145 1223,303 607,341 965,408 371,308 446,740 490,833 294,897 909,771 1052,1009 212,1096 1068,825 686,1052 1222,1238 1400,1332 1288,1463 914,1497 570,1495 614,1515 232,1441 352,1474 55,1397 1484,287',
  d: '160,532 671,1248 1305,18', e: '609,283 1387,225 1257,567 528,966 288,1100 193,364 1425,93',
  f: '172,65 1230,112 1147,245 993,350 767,505 1523,450 1341,599 311,467 617,657 656,1270 410,1461'
};
for (const s in dots) dots[s].split(' ').forEach(p => {
  const [x, y] = at(s, ...p.split(',').map(Number));
  el('circle', { cx: x, cy: y, r: 3.8, fill: '#b0242c', stroke: '#8a2228', 'stroke-width': .6 });
});

// Labels: sheet, x, y, text, style (n name, s station, p park, d district, r road), rotation.
const kinds = { n: '', s: 'label-station', p: 'label-park', d: 'label-district', r: 'label-road', l: 'label-station label-start' };
const labels = [
  ['a', 360, 82, 'Avenue du 18 Juin 1940', 'r', 8], ['a', 960, 48, 'Stade Paul', 'p'], ['a', 960, 105, 'Finch', 'p'], ['a', 315, 348, 'Parc Carrey', 'p'], ['a', 315, 408, 'de Bellemare', 'p'], ['a', 370, 540, 'Vergers de', 'p'], ['a', 378, 598, 'Buzenval', 'p'],
  ['a', 795, 760, 'Golf de Paris', 'p'], ['a', 960, 900, 'Beach Volley', 'p'], ['a', 290, 790, 'BUZENVAL', 'd'], ['a', 945, 382, 'Cycles', 'n'], ['a', 945, 445, 'Le Grevès', 'n'], ['a', 1220, 657, 'Popcycle', 'n'], ['a', 1417, 740, 'Les Coteaux', 's'], ['a', 1267, 804, "Le Val d'Or", 's'],
  ['a', 1138, 1015, 'Résidence Beausoleil', 'n'], ['a', 1442, 1234, 'Les Milons', 's'], ['a', 1305, 1478, 'Saint-Cloud', 's'], ['a', 420, 1365, 'Cimetière', 'p'], ['a', 420, 1425, 'de Garches', 'p'], ['a', 1440, 620, "Rue du Val d'Or", 'r', 2], ['a', 52, 1090, 'aint-', 'p'], ['a', 1338, 380, 'Bou', 'r', -76],
  ['b', 605, 378, 'Carrefour de Longchamp', 'n'], ['b', 1305, 710, 'Carrefour des Cascades', 'n'], ['b', 115, 1073, 'Grille de Saint-Cloud', 'n'], ['b', 250, 1190, 'Jardin Japonais', 'p'], ['b', 1160, 1098, 'Butte Mortemart', 'n'], ['b', 1337, 1350, "Porte d'Auteuil", 's'], ['b', 708, 1387, 'Porte de Boulogne', 'n'],
  ['b', 628, 1512, 'Cycler', 'n'], ['b', 1430, 1150, 'Boulevard Suchet', 'r', -68], ['b', 208, 530, "Allée du Bord de l'Eau", 'r', -71], ['b', 1568, 46, 'Carrefour du Bout des Lacs', 'n'],
  ['c', 645, 152, 'Avenue Victor Hugo', 'r', -30], ['c', 875, 90, '16è En', 'n'], ['c', 875, 155, 'Selle', 'n'], ['c', 1080, 105, 'Boissière', 's'], ['c', 1222, 264, 'Iéna', 's'], ['c', 608, 300, 'Rue de la Pompe', 's'], ['c', 965, 367, 'Trocadéro', 's'], ['c', 195, 413, 'Porte de la Muette', 'n'],
  ['c', 720, 590, 'Avenue Paul Doumer', 'r', -24], ['c', 445, 700, 'La Muette', 's'], ['c', 490, 793, 'Boulainvilliers', 's'], ['c', 292, 857, 'Ranelagh', 's'], ['c', 910, 732, 'Passy', 's'], ['c', 1052, 968, 'Bir-Hakeim', 's'], ['c', 212, 1056, 'Jasmin', 's'], ['c', 508, 1160, 'Ridy', 'n'], ['c', 1222, 1197, 'Dupleix', 's'],
  ['c', 1132, 1292, 'La Motte-Picquet - Grenelle', 'l'], ['c', 1288, 1422, 'Avenue Émile Zola', 's'], ['c', 912, 1455, 'Charles Michels', 's'], ['c', 568, 1453, 'Javel', 's'], ['c', 352, 1432, 'Mirabeau', 's'], ['c', 1100, 1485, 'Avenue Émile Zola', 'r', -4], ['c', 1228, 1520, 'Cyclable', 'n'], ['c', 172, 1522, 'Chardon-Lagache', 's'],
  ['c', 1240, 645, 'Quai Jacques Chirac', 'r', -46], ['c', 900, 1135, 'Quai de Grenelle', 'r', -46], ['c', 620, 1270, 'Voie Georges Pompidou', 'r', -51], ['c', 1437, 246, 'Alma-Marceau', 's'], ['c', 1475, 1385, 'Cambronne', 'l'], ['c', 1490, 1170, 'Avenue de Suffren', 'r', 38], ['c', 1310, 838, 'Ch', 'p'],
  ['d', 21, 493, 's - Marnes-la-Coquette', 'l'], ['d', 1112, 232, 'Rue Gounod', 'r', -6], ['d', 825, 330, 'Résidence Boucles de Seine', 'n'], ['e', -63, 157, 'Parc de Saint-Cloud', 's'], ['e', 193, 325, 'Boulogne - Pont de Saint-Cloud', 's'], ['e', -73, 438, 'Grille Clemenceau', 'n'], ['d', 1005, 643, 'Carré de la Boîte', 'n'], ['d', 234, 765, 'Combleval', 'n'],
  ['d', 1008, 788, 'Carré des 10 Arpents', 'n'], ['d', 1157, 908, 'Carré de la Cerisaie', 'n'], ['d', 375, 950, 'Carré de la Sablière', 'n'], ['d', 485, 1083, 'Carré de la Vieille Maison', 'n'], ['d', 1187, 1072, 'Carré du Roi Badin', 'n'], ['d', 1142, 1200, 'Rond de la Brousaille', 'n'], ['d', 670, 1208, "Sèvres Ville-d'Avray", 's'],
  ['e', 78, 1117, 'Musée de Sèvres', 's'], ['d', 1120, 1425, 'SÈVRES', 'd'], ['d', 400, 1322, 'Rue de Sèvres', 'r', 4], ['d', 1385, 1310, 'Grande Rue', 'r', -22], ['d', 697, 712, 'Route de Paris à Versailles', 'r', -54], ['d', 1468, 770, 'Quai du Maréchal Juin', 'r', 84], ['d', 240, 38, 'asteur', 'p'], ['d', 213, 178, 'S', 'd'],
  ['e', 438, 467, 'Cyclable', 'n'], ['e', 608, 242, 'Boulogne - Jean Jaurès', 's'], ['e', 1385, 183, 'Exelmans', 's'], ['e', 1255, 526, 'Porte de Saint-Cloud', 's'], ['e', 700, 523, 'Île', 'n'], ['e', 622, 556, 'En Se', 'n'], ['e', 358, 768, 'Ré-par-', 'n'], ['e', 358, 830, 'Bike', 'n'], ['e', 768, 798, 'Marcel Sembat', 's'], ['e', 528, 925, 'Billancourt', 's'],
  ['e', 1037, 993, 'Cyclo life', 'n'], ['e', 288, 1058, 'Pont de Sèvres', 's'], ['e', 1500, 1052, 'Issy Val de Seine', 's'], ['e', 678, 1113, 'Parc des', 'p'], ['e', 680, 1173, 'Glacières', 'p'], ['e', 418, 1153, 'Recyclerie', 'n'], ['e', 418, 1218, 'Sportive', 'n'], ['e', 418, 1283, 'Boulogne', 'n'], ['e', 418, 1348, 'Billancourt', 'n'],
  ['e', 520, 1455, 'Atelier', 'n'], ['e', 515, 1515, 'Culture', 'n'], ['e', 960, 1442, 'Giant', 'n'], ['e', 1403, 1383, 'Jacques-Henri Lartigue', 's'], ['e', 1250, 290, 'Boulevard Murat', 'r', 90], ['e', 138, 870, 'Le Gallo', 'r', 72], ['e', 197, 1430, 'Rue Troyon', 'r', 55],
  ['f', 315, 170, 'Bicycland', 'n'], ['f', 274, 272, 'Ecox', 'n'], ['f', 492, 308, 'Jardin vert', 'p'], ['f', 790, 85, 'Mon vélo', 'n'], ['f', 790, 150, 'en Seine', 'n'], ['f', 1230, 72, 'Commerce', 's'], ['f', 1147, 205, 'Félix Faure', 's'], ['f', 1333, 243, 'Pharmacycle', 'n'], ['f', 995, 308, 'Boucicaut', 's'], ['f', 767, 463, 'Lourmel', 's'],
  ['f', 1117, 445, 'Red-will', 'n'], ['f', 1205, 502, 'VéloRepar', 'n'], ['f', 1425, 408, 'Vaugirard', 'l'], ['f', 1340, 557, 'Convention', 's'], ['f', 310, 427, 'Pont du Garigliano', 's'], ['f', 333, 506, 'Pont du Garigliano', 's'], ['f', 575, 622, 'Balard', 's'], ['f', 335, 725, 'Henri Farman', 's'], ['f', 542, 808, 'Suzanne Lenglen', 's'],
  ['f', 818, 736, 'Desnouettes', 's'], ['f', 1055, 730, 'Culture', 'n'], ['f', 1055, 797, 'vélo', 'n'], ['f', 1002, 863, 'Porte de Versailles', 's'], ['f', 732, 917, "Porte d'Issy", 's'], ['f', 1100, 1032, 'Georges Brassens', 'l'], ['f', 1243, 1108, 'Holland', 'n'], ['f', 1243, 1170, 'Bikes', 'n'], ['f', 655, 1228, 'Corentin Celton', 's'],
  ['f', 410, 1420, "Mairie d'Issy", 's'], ['f', 770, 1516, 'CRC Cycles', 'n'], ['f', 1130, 1523, 'Malakoff - Plateau de Vanves', 'l'], ['f', 1320, 385, 'Rue Lecourbe', 'r', -27], ['f', 540, 1110, 'Rue Guynemer', 'r', -43]
];
labels.forEach(([s, x, y, text, kind, rot]) => {
  const [px, py] = at(s, x, y);
  el('text', { class: 'label ' + kinds[kind], transform: `translate(${px.toFixed(1)} ${py.toFixed(1)}) rotate(${rot || 0})`, y: 5.6 }, svg, text);
});
[['a', 112, 540, 'D 180'], ['a', 695, 1057, 'D 180'], ['a', 708, 1297, 'D 180'], ['e', 1053, 128, 'D 102'], ['b', 275, 1372, 'A 13']].forEach(([s, x, y, text]) => {
  const [px, py] = at(s, x, y), pink = text[0] === 'A', w = pink ? 38 : 48;
  el('rect', { x: px - w / 2, y: py - 10, width: w, height: 20, rx: 2, fill: pink ? '#e3b3b9' : '#eeedd6', stroke: pink ? '#cf979f' : '#d4d3b6' });
  el('text', { class: 'shield', x: px, y: py + 5, style: pink ? 'fill:#96707a' : '' }, svg, text);
});

// Race course.
const course = [
  ['b', '140,1530 155,1350 120,1150 118,1085 230,1118 540,1240 620,1275 700,1385 712,1360 690,1025 720,950 815,710 938,380 742,370 750,400 775,430 788,520 780,545 855,580', 7],
  ['b', '735,655 815,705 950,748 1150,738 1235,722 1210,740 1130,800 1020,970 915,1080 800,1080', 6.500],
  ['b', '800,1050 720,955 690,880 630,805 565,720 525,700', 6.500], ['b', '527,700 530,850 540,960 512,1115 530,1190 548,1215 540,1240', 6.500],
  ['e', '140,0 95,210 38,430 33,620 40,660 105,775 260,730 550,665 580,680', 7],
  ['e', '180,735 178,620 190,440 195,385 230,395 330,490 550,660 670,740 765,840 720,980 500,1110 355,1320 520,1465 620,1515 710,1515 820,1475 1005,1360 1110,1240 1190,1145 1265,1060 1283,1005 1110,935 870,880 770,845 805,725', 6],
  ['b', '118,1085 230,1118 540,1240', 9], ['b', '735,655 815,705', 9], ['b', '855,580 815,710', 8], ['e', '140,0 95,210 38,430 33,620 40,660 105,775', 9]
];
course.forEach(([s, p, w]) => el('path', { class: 'road-line', d: path(s, p), stroke: '#fff', 'stroke-width': w + 5, opacity: .85 }));
course.forEach(([s, p, w]) => el('path', { class: 'road-line', d: path(s, p), stroke: '#a9503d', 'stroke-width': w }));
[['b', 900, 370, 2], ['b', 815, 712, 25], ['b', 535, 845, -90], ['b', 230, 1118, 20], ['b', 540, 1245, 15], ['b', 1158, 737, 0], ['b', 157, 1362, 90], ['e', 95, 210, -82], ['e', 330, 490, 35], ['e', 262, 728, 170], ['e', 30, 630, -90], ['e', 870, 880, 10], ['e', 720, 980, -70], ['e', 1115, 1235, 130], ['e', 518, 1463, -145]].forEach(([s, x, y, r]) => {
  const [px, py] = at(s, x, y);
  el('path', { d: 'M9 0L-6 -7.500V7.500Z', fill: '#9c3b28', transform: `translate(${px} ${py}) rotate(${r})` });
});
const [dx, dy] = at('e', 805, 720);
el('circle', { cx: dx, cy: dy, r: 5.5 });
[['e', 637, 633, 'A', '#c0504d'], ['e', 805, 645, 'D', '#3b6a29'], ['b', 524, 697, '10'], ['b', 802, 1054, '15'], ['e', 194, 440, '20'], ['e', 627, 715, '5']].forEach(([s, x, y, text, color]) => {
  const [px, py] = at(s, x, y), r = color ? 23.500 : 16;
  el('circle', { cx: px + 1, cy: py + 3, r: r + 2, fill: 'rgba(0,0,0,.25)' });
  el('circle', { cx: px, cy: py, r, fill: color || '#fff', stroke: color || '#a9503d', 'stroke-width': color ? 0 : 2 });
  el('text', { class: color ? 'marker marker-end' : 'marker', x: px, y: py + (color ? 8 : 6) }, svg, text);
});
```
